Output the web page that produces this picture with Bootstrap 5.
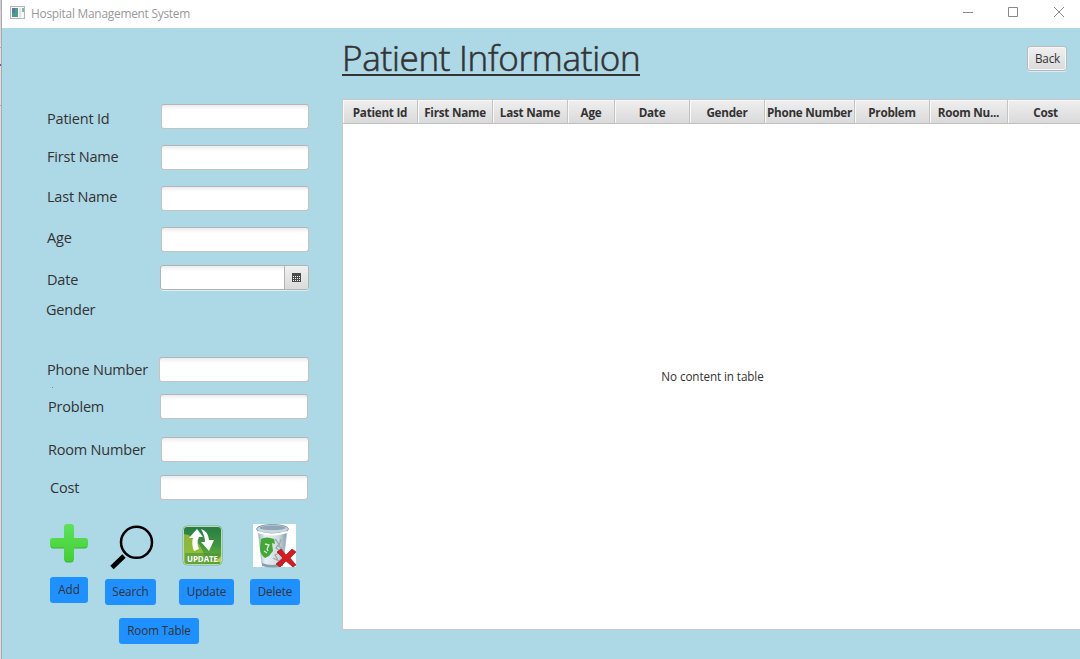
<!DOCTYPE html>
<html lang="en">
<head>
<meta charset="utf-8">
<title>Hospital Management System</title>
<link rel="stylesheet" href="https://cdn.jsdelivr.net/npm/bootstrap@5.3.0/dist/css/bootstrap.min.css">
<script src="https://cdn.jsdelivr.net/npm/bootstrap@5.3.0/dist/js/bootstrap.bundle.min.js"></script>
<style>
body{font-family:"Open Sans","Noto Sans",sans-serif;font-size:11.7px;letter-spacing:-.1px;color:#333;width:1080px;height:659px;overflow:hidden;line-height:16px}
.edge{width:2px;background:linear-gradient(#c9cdda 0 10px,#d8d8d8 10px 43px,#dedede 43px 47px,#aaa 47px 48px,#dedede 48px 64px,#4560b8 64px 66px,#dedede 66px 105px,#aaa 105px 106px,#ddd 106px);border-right:1px solid #aaa}
.titlebar{height:28px;background:#fff;color:#999;padding:0 15px 3px 8px}
.titlebar .caption{font-size:11.9px;letter-spacing:-.25px;margin-left:6px}
.scene{background:#add8e6}
.side{width:340px;padding:76px 0 0 45px}
.field{height:25px;margin-bottom:16px}
.field label{width:114px;font-size:14.5px;letter-spacing:-.2px;line-height:25px;white-space:nowrap}
.field .form-control{width:148px;height:25px;min-height:0;padding:0;border:1px solid #c3c3c3;border-top-color:#b5b5b5;border-radius:3px;background:linear-gradient(#ececec,#fff 5px)}
.picker{width:149px;height:25px;border:1px solid #b3b3b3;border-radius:3px;background:linear-gradient(#ececec,#fff 5px);box-shadow:0 1px 0 #dcebf0}
.picker .cal{width:24px;border-left:1px solid #b3b3b3;background:linear-gradient(#f0f0f0,#dadada);border-radius:0 2px 2px 0}
.btn.act{font-size:11.7px;letter-spacing:-.12px;line-height:16px;height:26px;padding:4px 0 6px;border:0;border-radius:3px;background:#1e90ff;color:#333}
.btn.back{width:40px;height:25px;margin:18px 13px 0 0;font-size:11.7px;letter-spacing:-.14px;line-height:16px;padding:3px 0 4px 1px;color:#333;border:1px solid #bababa;border-radius:3px;background:linear-gradient(#f0f0f0,#dadada);box-shadow:inset 0 0 0 1px #f6f6f6,0 1px 0 #d8ebf1}
.heading{font-size:35px;letter-spacing:-.28px;font-weight:300;-webkit-text-stroke:.6px #333;line-height:38px;margin:11px 0 0;border-bottom:2px solid #333;height:37px;white-space:nowrap}
.speck{width:1px;height:1px;margin:5px 0 6px 5px;background:#5a93a8}
.records{height:531px;border:1px solid #c8c8c8;border-right:0;background:#fff}
.heads{height:24px;border-bottom:1px solid #c0c0c0;background:linear-gradient(#efefef,#dadada)}
.heads div{flex:none;border-right:1px solid #c4c4c4;box-shadow:inset 1px 1px 0 #f8f8f8;font-weight:700;letter-spacing:-.25px;text-align:center;line-height:25px;white-space:nowrap;overflow:hidden}
</style>
</head>
<body class="d-flex">
<div class="edge flex-shrink-0"></div>
<div class="flex-grow-1 d-flex flex-column">
  <header class="titlebar d-flex align-items-center">
    <svg width="15" height="13" viewBox="0 0 15 13"><rect x=".5" y=".5" width="14" height="12" fill="#f7f7f7" stroke="#b5b5b5"/><path d="M2 2h6v9H2z" fill="#4c9c8c"/><path d="M2 2h3v5H2z" fill="#5878b0"/><path d="M9 2h2v9H9z" fill="#e2e2e2"/><path d="M12 2h2v4h-2z" fill="#78b8ae"/></svg>
    <span class="caption">Hospital Management System</span>
    <svg class="ms-auto" style="margin-top:-1px" width="102" height="12" viewBox="0 0 102 12" fill="none" stroke="#888"><path d="M0 6.500h10M45.500 1.500h9v9h-9zM91 1l10 10M101 1l-10 10"/></svg>
  </header>
  <main class="scene flex-grow-1 d-flex">
    <section class="side flex-shrink-0">
      <div class="field d-flex"><label style="margin-top:2px">Patient Id</label><input class="form-control"></div>
      <div class="field d-flex"><label style="margin-top:-1px">First Name</label><input class="form-control"></div>
      <div class="field d-flex"><label style="margin-top:-2px">Last Name</label><input class="form-control"></div>
      <div class="field d-flex mb-0"><label style="margin-top:-2px">Age</label><input class="form-control"></div>
      <div class="field d-flex mb-0" style="margin-top:13px"><label style="margin-top:2px;width:113px">Date</label>
        <div class="picker d-flex justify-content-end"><div class="cal d-flex align-items-center justify-content-center"><svg width="9" height="9" viewBox="0 0 9 9"><path d="M0 0h9v9H0z" fill="#4a4a4a"/><path d="M1.500 3v6M3.500 3v6M5.500 3v6M7.500 3v6" stroke="#eee" stroke-dasharray="1 1"/></svg></div></div></div>
      <div class="field d-flex mb-0" style="margin-top:7px;margin-left:-1px"><label>Gender</label></div>
      <div class="field d-flex mb-0" style="margin-top:35px"><label style="width:112px">Phone Number</label><input class="form-control" style="width:150px"></div>
      <div class="speck"></div>
      <div class="field d-flex mb-0" style="margin-left:1px"><label style="width:112px">Problem</label><input class="form-control"></div>
      <div class="field d-flex mb-0" style="margin-top:18px;margin-left:1px"><label style="width:113px">Room Number</label><input class="form-control"></div>
      <div class="field d-flex mb-0" style="margin-top:13px;margin-left:3px"><label style="width:110px">Cost</label><input class="form-control"></div>
      <div class="d-flex align-items-start" style="margin:24px 0 0 3px">
        <div class="d-flex flex-column" style="width:38px"><svg width="38" height="53" viewBox="0 0 38 53"><defs><linearGradient id="g" x2="0" y2="1"><stop stop-color="#5de257"/><stop offset="1" stop-color="#43cf35"/></linearGradient></defs><path d="M17 0h4q3 0 3 3v11h11q3 0 3 3v4q0 3-3 3H24v11q0 3-3 3h-4q-3 0-3-3V24H3q-3 0-3-3v-4q0-3 3-3h11V3q0-3 3-3z" fill="url(#g)"/><path d="M1 23q1 1 2 1h11M24 24h11q1 0 2-1M15 37q1 1 2 1h4q1 0 2-1" fill="none" stroke="#35b52b"/></svg><button class="btn act">Add</button></div>
        <div class="d-flex flex-column" style="width:51px;margin-left:17px"><svg width="51" height="55" viewBox="0 0 51 55"><circle cx="31.500" cy="18.300" r="15.500" fill="none" stroke="#000" stroke-width="2.500"/><path d="M19 32L7 43.500" stroke="#000" stroke-width="4.800"/></svg><button class="btn act">Search</button></div>
        <div class="d-flex flex-column" style="width:55px;margin-left:23px"><svg width="55" height="55" viewBox="0 0 55 55"><defs><linearGradient id="u" x2="0" y2="1"><stop stop-color="#287d43"/><stop offset=".5" stop-color="#3f963e"/><stop offset="1" stop-color="#82b82e"/></linearGradient></defs><rect x="4" y="2" width="39" height="39" rx="4" fill="#e8f6e4" stroke="#4c9c50" stroke-width=".6"/><rect x="5" y="3" width="37" height="37" rx="3" fill="url(#u)"/><path d="M5 10q15 1 23 29H8q-3 0-3-3z" fill="#a5c63a" opacity=".75"/><path d="M6 29h35v11H8q-2 0-2-3z" fill="#45943a" opacity=".6"/><path d="M33 38h9v-6q-3 5-9 5z" fill="#b8d04a"/><path d="M15 27q-3-7-1-13h-4l8-9 6 8h-4q-3 6 0 12zM22 5q7 2 8 11h5l-5 11-8-9h4q0-6-4-13z" fill="#fff"/><text x="23.500" y="37.500" text-anchor="middle" font-family="Open Sans" font-weight="700" font-size="8" fill="#fff" letter-spacing="0" textLength="31" lengthAdjust="spacingAndGlyphs">UPDATE</text></svg><button class="btn act">Update</button></div>
        <div class="d-flex flex-column" style="width:50px;margin-left:16px"><svg width="50" height="55" viewBox="0 0 50 55"><defs><linearGradient id="b"><stop stop-color="#9eb8c6"/><stop offset=".25" stop-color="#e8f1f4"/><stop offset=".7" stop-color="#d0dce2"/><stop offset="1" stop-color="#829dac"/></linearGradient></defs><path d="M3 0h43v43H3z" fill="#fff"/><path d="M8 6h29l-4 34q-10 5-21 0z" fill="url(#b)" stroke="#a6b7c1" stroke-width=".7"/><path d="M12 39q10 4 21 0v3q-11 3-21 0z" fill="#859fae"/><ellipse cx="22.500" cy="5" rx="16" ry="4.500" fill="#c9d8e0" stroke="#849cad"/><ellipse cx="22.500" cy="3.800" rx="13" ry="2.300" fill="#8fa6b4"/><path d="M8 8q14 5 29 0" fill="none" stroke="#fff" stroke-width="2"/><path d="M25 15l4 5-3 4 5 4-6 3 3 5M31 15l-2 7 5 5M23 34l6 3" fill="none" stroke="#a1a8ac" stroke-width="1.300"/><path d="M11 15q5-3 13 0l1 5-3-1 1 8-4 5-4 2q-5-4-5-10z" fill="#43a637"/><path d="M15 20l4 1-2 4 1 2M14 27l3 2" fill="none" stroke="#dcebdc" stroke-width="1.300"/><path d="M27 28l4-3 5 6 6-6 4 3-6 6 6 7-3 2-7-6-6 6-4-3 7-6z" fill="#d51a20" stroke="#a5161a" stroke-width=".7"/></svg><button class="btn act">Delete</button></div>
      </div>
      <button class="btn act d-block" style="width:80px;margin:13px 0 0 72px">Room Table</button>
    </section>
    <section class="flex-grow-1">
      <div class="d-flex justify-content-between align-items-start" style="height:71px">
        <h1 class="heading">Patient Information</h1>
        <button class="btn back">Back</button>
      </div>
      <div class="records d-flex flex-column">
        <div class="heads d-flex">
          <div style="width:75px">Patient Id</div><div style="width:75px">First Name</div><div style="width:75px">Last Name</div><div style="width:47px">Age</div><div style="width:75px">Date</div><div style="width:75px">Gender</div><div style="width:90px">Phone Number</div><div style="width:75px">Problem</div><div style="width:78px">Room Nu...</div><div class="border-end-0" style="width:72px;padding-left:3px">Cost</div>
        </div>
        <div class="flex-grow-1 d-flex align-items-center justify-content-center" style="padding:0 0 2px 2px"><span>No content in table</span></div>
      </div>
    </section>
  </main>
</div>
</body>
</html>
